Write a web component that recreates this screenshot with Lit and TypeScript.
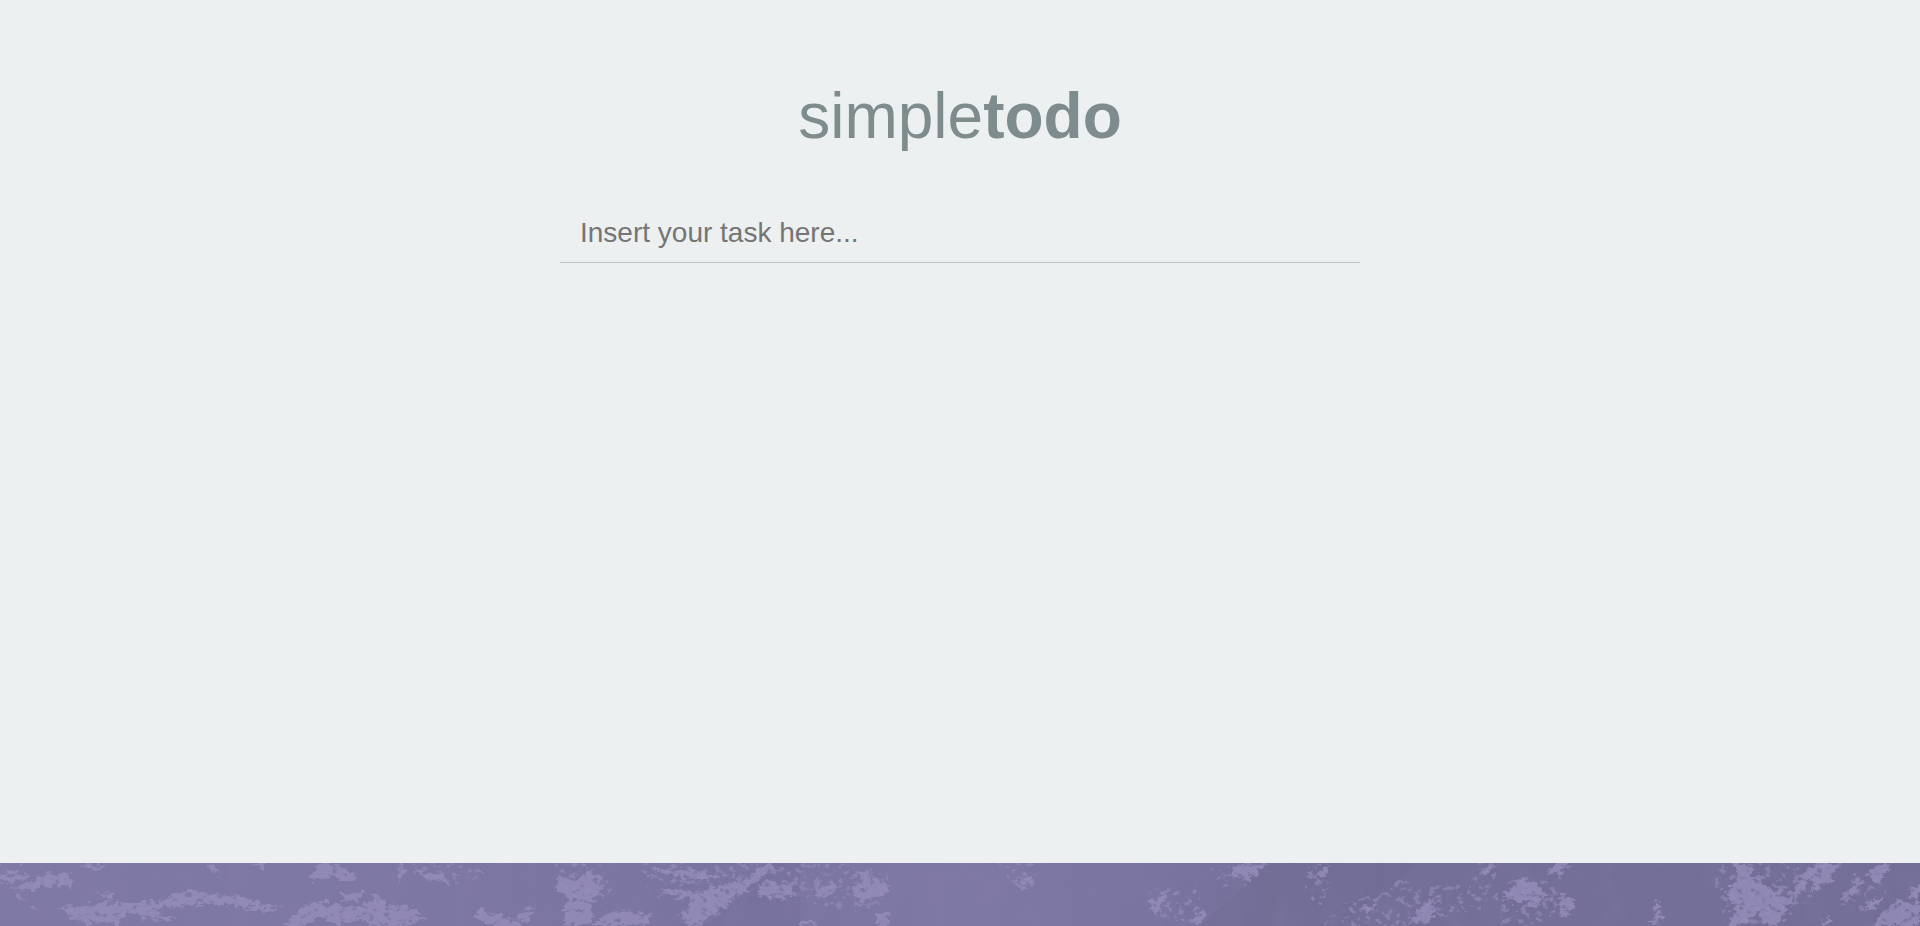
import { LitElement, html, css, svg } from "lit";
import { customElement } from "lit/decorators.js";

/** Solid pale patches of the painted texture. */
const patches: string[] = [
  "M0 12L14 7L26 13L29 17L0 19Z",
  "M6 28L28 20L44 10L68 10L73 25L60 22L34 26Z",
  "M80 4L92 0H108L96 6Z",
  "M205 0L216 4L222 12L211 8Z",
  "M252 0H268L260 6Z",
  "M58 45L85 43L105 40L140 40L165 37L175 30L190 28L215 32L240 33L262 41L284 45L260 48L230 42L200 42L170 44L150 46L178 57L150 55L130 50L115 60L85 59L68 54Z",
  "M95 31L115 28L112 36Z",
  "M308 15L318 2L335 0L348 6L358 14L348 18L326 13L313 19Z",
  "M340 31L367 29L355 37L343 38Z",
  "M282 63L300 46L315 38L335 41L355 44L366 41L376 32L386 39L400 45V63H372L356 56L340 62L318 53L306 63Z",
  "M400 0L406 4L398 24Z",
  "M410 8L440 11L450 20L434 18Z",
  "M400 43L412 45L427 56L412 61L400 63Z",
  "M471 53L482 45L500 54L517 56L535 40L528 56L516 63H494Z",
  "M555 24L560 13L578 17L590 8L601 13L599 28L591 40L593 54L587 63H566L563 48L568 36Z",
  "M592 63L608 50L630 47L653 53L646 63Z",
  "M688 34L716 24L742 17L757 8L766 0H774L764 12L748 26L732 38L716 50L700 61L688 63L677 50L690 46Z",
  "M652 6H690L720 13L700 18L672 12Z",
  "M660 24L692 29L718 31L700 37L672 32Z",
  "M757 26L770 15L778 22L796 17L789 35L768 37Z",
  "M816 26L837 17L831 33L818 35Z",
  "M850 24L863 19L857 9L868 6L873 16L888 20L889 31L871 34L865 45L857 34Z",
  "M874 63L880 48L889 51L887 63Z",
  "M800 57L812 56L817 63H800Z",
  "M1018 20L1026 13L1035 15L1024 26Z",
  "M1149 39L1158 35L1167 27L1161 41L1156 53Z",
  "M1192 63L1200 48L1206 52L1200 63Z",
  "M1230 8L1242 1L1268 0L1257 10L1246 19Z",
  "M1319 11L1326 2L1326 15Z",
  "M1364 44L1373 42L1372 48L1366 49Z",
  "M1408 62L1418 48L1428 38L1440 31L1433 44L1435 55L1422 59Z",
  "M1480 12L1490 1L1494 6L1486 14Z",
  "M1510 26L1523 14L1538 21L1546 32L1534 45L1526 39L1514 37L1501 31Z",
  "M1547 9L1554 0H1562L1573 2L1560 15Z",
  "M1560 31L1571 33L1575 46L1560 54Z",
  "M1651 59L1660 49L1663 52L1658 63Z",
  "M1652 45L1660 38L1663 42L1656 48Z",
  "M1735 0H1750L1752 13L1774 27L1784 34L1796 25L1802 14L1808 5L1825 0H1841L1829 22L1816 23L1810 33L1815 19L1808 18L1799 32L1786 43L1780 63H1764L1758 47L1744 63H1730L1735 44L1725 30L1737 18Z",
  "M1839 36L1849 26L1857 11L1863 17L1853 33Z",
  "M1874 0H1892L1881 15L1876 23L1871 8Z",
  "M1861 47L1875 35L1883 35L1874 45Z",
  "M1874 63L1883 48L1898 39L1920 40V63Z",
  "M1906 34L1912 25L1920 22V38Z",
  "M1821 63L1827 52L1831 55L1828 63Z",
];

/** Areas broken up into fine flecks. */
const flecks: string[] = [
  "M0 0H24L18 8L0 14Z",
  "M10 28L28 30L38 48L28 46Z",
  "M400 0H470L490 14L452 22L420 12Z",
  "M555 0H600L612 28L596 40L560 30Z",
  "M640 0H760L740 24L716 42L650 34Z",
  "M772 4H800V40L756 34Z",
  "M800 0H840L888 12V40L860 50L800 38Z",
  "M996 0H1034L1036 28L1014 24Z",
  "M1146 26L1200 24V60H1160Z",
  "M1210 4L1260 0L1240 22L1220 24Z",
  "M1308 0H1336L1322 46L1304 34Z",
  "M1378 30L1400 16L1426 24L1460 20L1466 46L1424 63H1320L1340 42Z",
  "M1478 0H1500L1484 46L1460 50Z",
  "M1492 34L1514 14L1546 18L1560 30V54L1524 63H1500Z",
  "M1720 0H1850L1810 36L1780 63H1726L1714 20Z",
  "M1838 40L1870 6L1890 6L1884 40L1860 50Z",
];

@customElement("todo-texture")
class TodoTexture extends LitElement {
  static styles = css`
    :host {
      display: block;
      overflow: hidden;
      background: #7974a0;
    }
    .art {
      display: block;
      width: 100%;
      height: 100%;
    }
    .pale {
      fill: #958cb9;
    }
    .slope {
      fill: #706c95;
    }
  `;

  render() {
    return html`
      <svg class="art" viewBox="0 0 1920 63" preserveAspectRatio="xMidYMin slice" aria-hidden="true">
        <defs>
          <linearGradient id="shade">
            <stop offset="0" stop-color="#7f79a6" />
            <stop offset="0.2" stop-color="#7d77a4" />
            <stop offset="0.38" stop-color="#7974a0" />
            <stop offset="0.5" stop-color="#7e78a4" />
            <stop offset="0.6" stop-color="#7974a0" />
            <stop offset="0.68" stop-color="#736f98" />
            <stop offset="1" stop-color="#726e97" />
          </linearGradient>
          <filter id="rough" x="0" y="0" width="1920" height="63" filterUnits="userSpaceOnUse" color-interpolation-filters="sRGB">
            <feTurbulence type="fractalNoise" baseFrequency="0.13 0.2" numOctaves="4" seed="7" result="noise" />
            <feDisplacementMap in="SourceGraphic" in2="noise" scale="13" xChannelSelector="R" yChannelSelector="G" result="torn" />
            <feColorMatrix in="noise" values="0 0 0 0 0  0 0 0 0 0  0 0 0 0 0  0 0 5 0 -1.1" result="holes" />
            <feComposite in="torn" in2="holes" operator="in" />
            <feGaussianBlur stdDeviation="0.5" />
          </filter>
          <filter id="fleck" x="0" y="0" width="1920" height="63" filterUnits="userSpaceOnUse" color-interpolation-filters="sRGB">
            <feTurbulence type="fractalNoise" baseFrequency="0.14 0.18" numOctaves="4" seed="21" />
            <feColorMatrix values="0 0 0 0 0  0 0 0 0 0  0 0 0 0 0  9 0 0 0 -5" result="spots" />
            <feComposite in="SourceGraphic" in2="spots" operator="in" />
            <feGaussianBlur stdDeviation="0.4" />
          </filter>
          <filter id="mottle" x="0" y="0" width="1920" height="63" filterUnits="userSpaceOnUse" color-interpolation-filters="sRGB">
            <feTurbulence type="fractalNoise" baseFrequency="0.04 0.025" numOctaves="5" seed="4" />
            <feColorMatrix values="0 0 0 0 0.55  0 0 0 0 0.51  0 0 0 0 0.69  2 0 0 0 -0.8" />
          </filter>
        </defs>
        <rect width="1920" height="63" fill="url(#shade)" />
        <path class="slope" d="M774 0H800V63H700Z" opacity="0.25" />
        <path class="slope" d="M1270 0H1420L1340 63H1200Z" opacity="0.6" />
        <rect width="1920" height="63" filter="url(#mottle)" opacity="0.2" />
        <g class="pale" filter="url(#fleck)" opacity="0.65">${flecks.map((d) => svg`<path d=${d} />`)}</g>
        <g class="pale" filter="url(#rough)" opacity="0.85">${patches.map((d) => svg`<path d=${d} />`)}</g>
      </svg>
    `;
  }
}

@customElement("app-root")
class AppRoot extends LitElement {
  static properties = { tasks: { state: true } };
  declare tasks: string[];

  static styles = css`
    :host {
      display: flex;
      flex-direction: column;
      min-height: 100vh;
      background: #ecf0f1;
      color: #7f8c8d;
      font-family: Arial, "Liberation Sans", sans-serif;
    }
    .page {
      flex: 1;
      box-sizing: border-box;
      width: 100%;
      max-width: 800px;
      margin: 0 auto;
      padding-top: 80px;
    }
    .title {
      margin: 0 0 52px;
      font-size: 64px;
      line-height: 72px;
      font-weight: 400;
      text-align: center;
    }
    .strong {
      font-weight: 700;
    }
    .field {
      display: block;
      box-sizing: border-box;
      width: 100%;
      margin: 0;
      padding: 12px 20px;
      border: 0;
      border-bottom: 1px solid #bdc3c7;
      border-radius: 0;
      outline: 0;
      background: transparent;
      color: inherit;
      font-family: inherit;
      font-size: 28px;
      line-height: 34px;
    }
    .field::placeholder {
      color: #757575;
    }
    .list {
      margin: 0;
      padding: 0;
      list-style: none;
    }
    .task {
      padding: 12px 20px;
      font-size: 28px;
      line-height: 34px;
    }
    .band {
      height: 63px;
    }
  `;

  constructor() {
    super();
    this.tasks = [];
  }

  private add(event: KeyboardEvent) {
    const field = event.target as HTMLInputElement;
    const text = field.value.trim();
    if (event.key !== "Enter" || !text) return;
    this.tasks = [...this.tasks, text];
    field.value = "";
  }

  render() {
    return html`
      <main class="page">
        <h1 class="title">simple<span class="strong">todo</span></h1>
        <input class="field" type="text" aria-label="New task" placeholder="Insert your task here..." @keydown=${this.add} />
        <ul class="list">
          ${this.tasks.map((task) => html`<li class="task">${task}</li>`)}
        </ul>
      </main>
      <todo-texture class="band"></todo-texture>
    `;
  }
}
